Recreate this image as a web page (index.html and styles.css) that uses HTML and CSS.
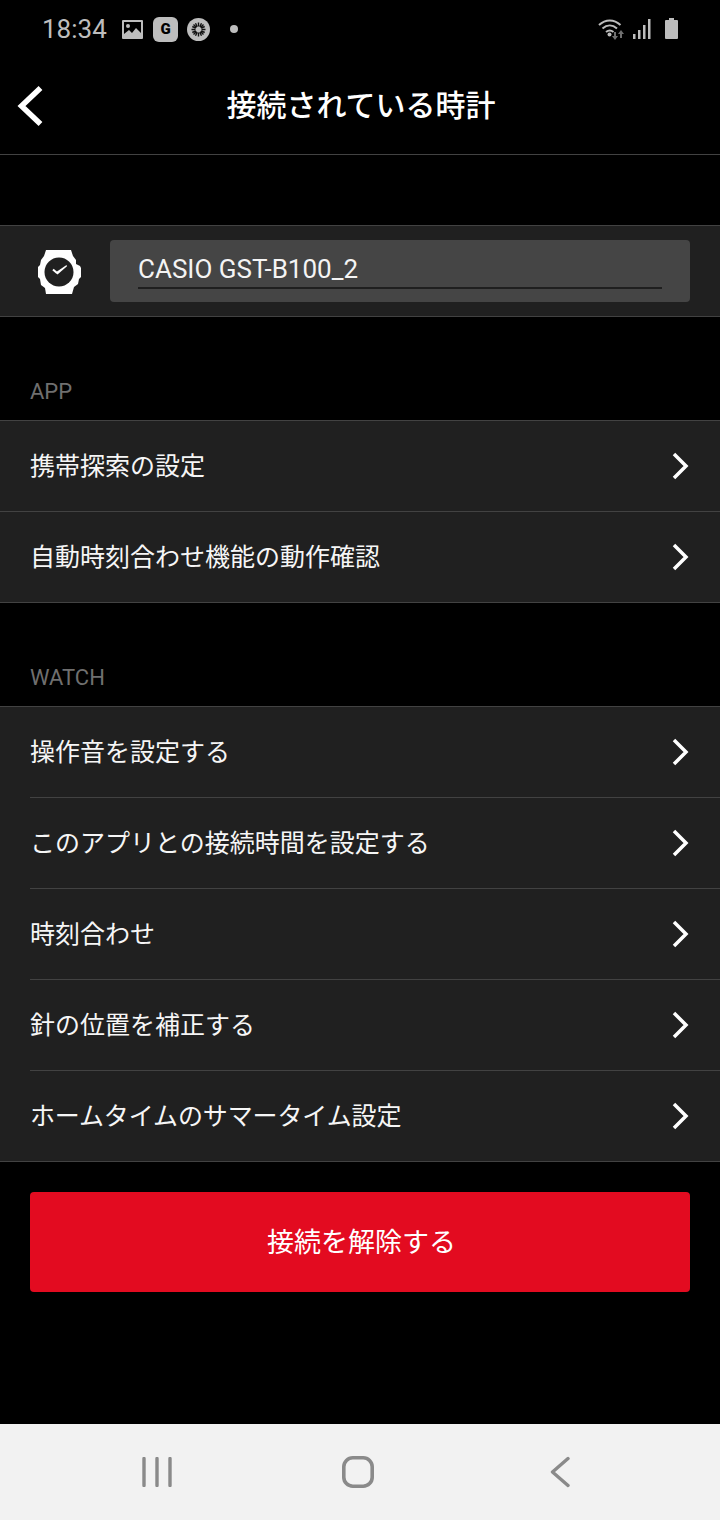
FILE: index.html
```html
<!DOCTYPE html>
<html lang="ja">
<head>
<meta charset="utf-8">
<title>接続されている時計</title>
<link rel="stylesheet" href="styles.css">
</head>
<body>
<div class="screen">
  <div class="status">
    <span class="time">18:34</span>
    <svg class="st-pic" width="21" height="19" viewBox="0 0 21 19"><path fill="#bdbdbd" d="M1 0h19a1 1 0 0 1 1 1v17a1 1 0 0 1-1 1H1a1 1 0 0 1-1-1V1a1 1 0 0 1 1-1z"/><path fill="#000" d="M2 2h17v15H2z"/><path fill="#bdbdbd" d="M2 17v-3l5-4 3 3 4-5 5 5v4z"/><circle cx="6" cy="6" r="2" fill="#bdbdbd"/></svg>
    <span class="st-g">G</span>
    <svg class="st-burst" width="23" height="23" viewBox="0 0 23 23"><circle cx="11.500" cy="11.500" r="11.500" fill="#bdbdbd"/><path stroke="#111" stroke-width="1.400" fill="none" d="M4.500 11.500h4M14.500 11.500h4M11.500 4.500v4M11.500 14.500v4M6.500 6.500l3 3M16.500 6.500l-3 3M6.500 16.500l3-3M16.500 16.500l-3-3M8.500 5.300l1.700 3.500M14.500 5.300l-1.700 3.500M8.500 17.700l1.700-3.500M14.500 17.700l-1.700-3.500M5.300 8.500l3.500 1.700M17.700 8.500l-3.500 1.700M5.300 14.500l3.500-1.700M17.700 14.500l-3.500-1.700"/></svg>
    <span class="st-dot"></span>
    <span class="st-spacer"></span>
    <svg class="st-wifi" width="27" height="22" viewBox="0 0 27 22"><g fill="none" stroke="#bdbdbd" stroke-width="2"><path d="M1 7c6.500-6 15-6 21.500 0"/><path d="M4.500 10.500c4.500-4 10-4 14.500 0"/><path d="M8 14c2.500-2 5-2 7.500 0"/></g><circle cx="11.500" cy="16.500" r="2" fill="#bdbdbd"/><path fill="#707070" d="M16 14h2v4h2l-3 4-3-4h2z"/><path fill="#707070" d="M23 12l3 4h-2v4h-2v-4h-2z"/></svg>
    <svg class="st-signal" width="18" height="20" viewBox="0 0 18 20"><g fill="#bdbdbd"><rect x="0" y="15" width="2.500" height="5"/><rect x="5" y="11" width="2.500" height="9"/><rect x="10" y="6" width="2.500" height="14"/><rect x="15" y="0" width="2.500" height="20"/></g></svg>
    <svg class="st-batt" width="13" height="21" viewBox="0 0 13 21"><path fill="#bdbdbd" d="M4 0h5v2h3a1 1 0 0 1 1 1v17a1 1 0 0 1-1 1H1a1 1 0 0 1-1-1V3a1 1 0 0 1 1-1h3z"/></svg>
  </div>

  <header class="head">
    <svg class="back" width="28" height="42" viewBox="0 0 28 42"><path d="M25.500 3L6.500 21l19 18" fill="none" stroke="#fff" stroke-width="5.500"/></svg>
    <h1 class="title">接続されている時計</h1>
  </header>

  <section class="device">
    <svg class="watch" width="44" height="44" viewBox="0 0 44 44">
      <path fill="#fff" d="M8 0H33L35 6L38 10V14L42 16L43 18V27L41 29L40 34L36 37L34 44H8L7 38L3 35L2 29L0 27V17L2 15L3 10L6 6Z"/>
      <circle cx="21" cy="22" r="14.500" fill="#202020"/>
      <path fill="#fff" d="M28.500 15L29 16.200L19.500 24.500L17.500 22.500z"/>
      <path d="M19 23l-4-3.500" stroke="#fff" stroke-width="2" fill="none"/>
    </svg>
    <div class="field"><span class="field-text">CASIO GST-B100_2</span></div>
  </section>

  <h2 class="section-label">APP</h2>
  <ul class="list">
    <li class="row"><span class="row-text">携帯探索の設定</span><svg class="chev" width="18" height="28" viewBox="0 0 18 28"><path d="M3 2l12 12L3 26" fill="none" stroke="#fff" stroke-width="3.500"/></svg></li>
    <li class="row"><span class="row-text">自動時刻合わせ機能の動作確認</span><svg class="chev" width="18" height="28" viewBox="0 0 18 28"><path d="M3 2l12 12L3 26" fill="none" stroke="#fff" stroke-width="3.500"/></svg></li>
  </ul>

  <h2 class="section-label">WATCH</h2>
  <ul class="list">
    <li class="row row-inset"><span class="row-text">操作音を設定する</span><svg class="chev" width="18" height="28" viewBox="0 0 18 28"><path d="M3 2l12 12L3 26" fill="none" stroke="#fff" stroke-width="3.500"/></svg></li>
    <li class="row row-inset"><span class="row-text">このアプリとの接続時間を設定する</span><svg class="chev" width="18" height="28" viewBox="0 0 18 28"><path d="M3 2l12 12L3 26" fill="none" stroke="#fff" stroke-width="3.500"/></svg></li>
    <li class="row row-inset"><span class="row-text">時刻合わせ</span><svg class="chev" width="18" height="28" viewBox="0 0 18 28"><path d="M3 2l12 12L3 26" fill="none" stroke="#fff" stroke-width="3.500"/></svg></li>
    <li class="row row-inset"><span class="row-text">針の位置を補正する</span><svg class="chev" width="18" height="28" viewBox="0 0 18 28"><path d="M3 2l12 12L3 26" fill="none" stroke="#fff" stroke-width="3.500"/></svg></li>
    <li class="row"><span class="row-text row-tight">ホームタイムのサマータイム設定</span><svg class="chev" width="18" height="28" viewBox="0 0 18 28"><path d="M3 2l12 12L3 26" fill="none" stroke="#fff" stroke-width="3.500"/></svg></li>
  </ul>

  <div class="action"><button class="disconnect">接続を解除する</button></div>
  <div class="grow"></div>

  <nav class="nav">
    <svg class="nav-recents" width="30" height="30" viewBox="0 0 30 30"><path d="M2 1.500v27M15 1.500v27M28 1.500v27" stroke="#8a8a8a" stroke-width="3.400" stroke-linecap="round"/></svg>
    <svg class="nav-home" width="32" height="32" viewBox="0 0 32 32"><rect x="1.800" y="1.800" width="28.400" height="28.400" rx="9" fill="none" stroke="#8a8a8a" stroke-width="3.600"/></svg>
    <svg class="nav-back" width="20" height="32" viewBox="0 0 20 32"><path d="M18 2.500L2.500 16 18 29.500" fill="none" stroke="#8a8a8a" stroke-width="3.400" stroke-linecap="round" stroke-linejoin="round"/></svg>
  </nav>
</div>
</body>
</html>
```

FILE: styles.css
```css
* { box-sizing: border-box; }
html, body { margin: 0; padding: 0; background: #000; }
body { font-family: Roboto, "Noto Sans CJK JP", sans-serif; color: #fff; }
.screen { width: 720px; height: 1520px; display: flex; flex-direction: column; background: #000; }

.status { height: 58px; display: flex; align-items: center; padding: 0 42px 0 42px; color: #bdbdbd; flex: none; }
.time { font-size: 26px; line-height: 58px; width: 80px; }
.st-g { width: 25px; height: 25px; margin-left: 10px; border-radius: 6px; background: #bdbdbd; color: #000; font: 900 15px/25px Roboto, sans-serif; text-align: center; }
.st-burst { margin-left: 9px; }
.st-dot { width: 8px; height: 8px; margin-left: 20px; border-radius: 50%; background: #bdbdbd; }
.st-spacer { flex: 1; }
.st-wifi { margin-top: -1px; }
.st-signal { margin-left: 8px; }
.st-batt { margin-left: 14px; margin-top: -1px; }

.head { height: 97px; flex: none; display: flex; align-items: center; justify-content: center; position: relative; border-bottom: 1px solid #424242; }
.back { position: absolute; left: 15px; top: 27px; }
.title { margin: 0 0 6px; padding-left: 2px; font-size: 30px; font-weight: 500; }

.device { margin-top: 70px; height: 92px; flex: none; display: flex; align-items: center; background: #202020; border-top: 1px solid #424242; border-bottom: 1px solid #424242; padding: 0 30px 0 38px; }
.watch { flex: none; margin-top: 1px; }
.field { margin-left: 28px; flex: 1; height: 62px; background: #454545; border-radius: 4px; padding: 0 28px; display: flex; }
.field-text { flex: 1; height: 49px; font-size: 26px; line-height: 59px; color: #f4f4f4; border-bottom: 2px solid #1f1f1f; }

.section-label { margin: 0; height: 103px; padding-top: 61px; font-size: 22px; line-height: 28px; font-weight: 400; color: #6f6f6f; padding-left: 30px; flex: none; }

.list { margin: 0; padding: 0; list-style: none; background: #202020; border-top: 1px solid #424242; flex: none; }
.row { height: 91px; display: flex; align-items: center; justify-content: space-between; padding: 0 31px 0 30px; font-size: 25px; color: #f6f6f6; border-bottom: 1px solid #424242; }
.row-text { margin-bottom: 4px; }
.row-tight { letter-spacing: -0.13px; }
.row-inset { border-bottom: none; position: relative; padding-bottom: 1px; }
.row-inset::after { content: ""; position: absolute; left: 30px; right: 0; bottom: 0; height: 1px; background: #424242; }
.chev { flex: none; }

.action { padding: 30px 30px 0; flex: none; }
.disconnect { display: block; width: 100%; height: 100px; border: 0; border-radius: 4px; padding: 0 0 4px 3px; background: #e30b20; color: #fff; font: 400 27px "Noto Sans CJK JP", sans-serif; }
.grow { flex: 1; }

.nav { height: 96px; flex: none; background: #f2f2f2; display: flex; align-items: center; padding-left: 142px; }
.nav-home { margin-left: 170px; }
.nav-back { margin-left: 176px; }
```
